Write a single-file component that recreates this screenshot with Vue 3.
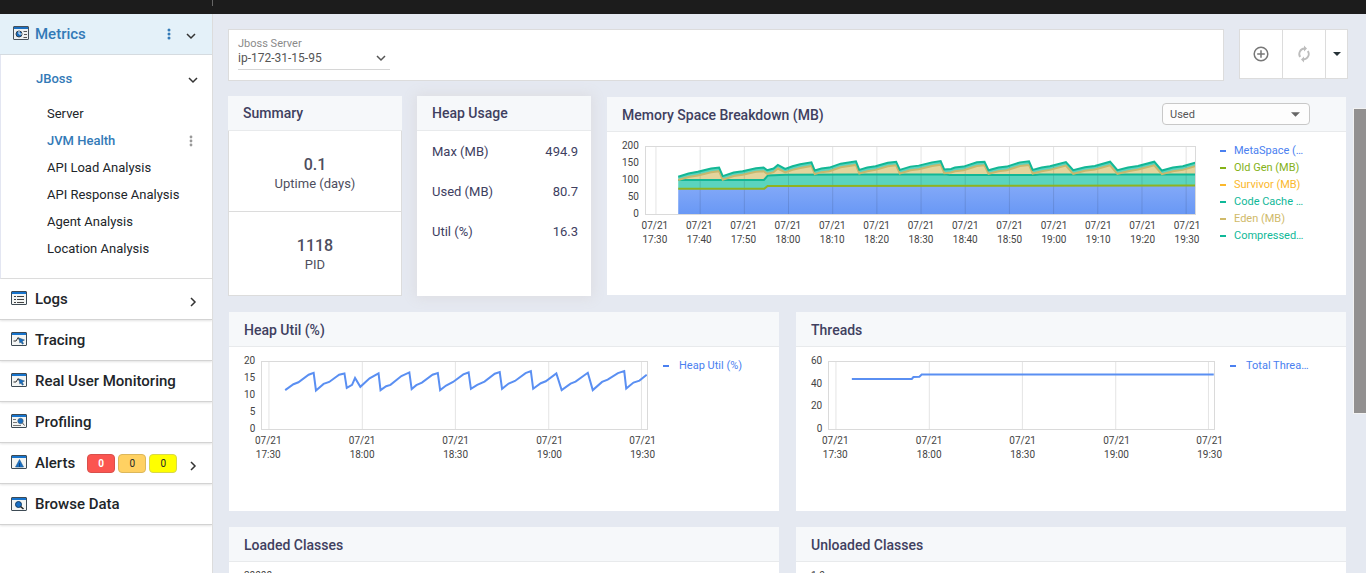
<script setup>
import { ref } from 'vue'

const server = ref('ip-172-31-15-95')
const mode = ref('Used')

const metricPages = [
  { label: 'Server' },
  { label: 'JVM Health', active: true },
  { label: 'API Load Analysis' },
  { label: 'API Response Analysis' },
  { label: 'Agent Analysis' },
  { label: 'Location Analysis' },
]

const sections = [
  { label: 'Logs', icon: 'logs', arrow: true },
  { label: 'Tracing', icon: 'pulse' },
  { label: 'Real User Monitoring', icon: 'pulse' },
  { label: 'Profiling', icon: 'profile' },
  {
    label: 'Alerts',
    icon: 'alert',
    arrow: true,
    badges: [
      { level: 'critical', count: 0 },
      { level: 'major', count: 0 },
      { level: 'minor', count: 0 },
    ],
  },
  { label: 'Browse Data', icon: 'browse' },
]

const summary = [
  { value: '0.1', label: 'Uptime (days)' },
  { value: '1118', label: 'PID' },
]

const heapUsage = [
  { label: 'Max (MB)', value: '494.9' },
  { label: 'Used (MB)', value: '80.7' },
  { label: 'Util (%)', value: '16.3' },
]

const memoryWidth = 1653
const plotHeight = 205

// Total memory curve; x and y are plot units measured from the top left corner.
const total = [
  [97, 91], [128, 81], [156, 76], [196, 66], [220, 63], [231, 89], [264, 78], [291, 74], [331, 65], [354, 63],
  [365, 71], [384, 66], [397, 55], [419, 67], [441, 59], [464, 53], [498, 47], [508, 72], [528, 66], [552, 63],
  [586, 51], [632, 44], [642, 70], [666, 63], [691, 59], [728, 48], [753, 45], [764, 70], [796, 60], [821, 57],
  [861, 47], [887, 43], [898, 69], [918, 67], [930, 63], [956, 60], [996, 47], [1019, 45], [1031, 71], [1061, 63],
  [1086, 60], [1126, 47], [1153, 44], [1164, 70], [1191, 63], [1216, 59], [1264, 46], [1286, 71], [1321, 62],
  [1351, 58], [1397, 45], [1419, 71], [1451, 63], [1481, 58], [1530, 45], [1553, 72], [1586, 63], [1616, 59],
  [1653, 48],
]
const codeCache = [[97, 101], [355, 101], [367, 87], [420, 85], [640, 84], [905, 84], [915, 86], [1170, 86], [1185, 84], [1653, 84]]
const metaSpace = [[97, 128], [356, 128], [366, 119], [1653, 118]]
const eden = total.map(([x, y]) => [x, Math.min(y + 11, x < 360 ? 101 : 84)])

const line = (points) => points.map((p) => p.join(',')).join(' ')
const area = (upper, lower) => line([...upper, ...[...lower].reverse()])
const floor = [[97, plotHeight], [memoryWidth, plotHeight]]

const memoryLabels = ['17:30', '17:40', '17:50', '18:00', '18:10', '18:20', '18:30', '18:40', '18:50', '19:00', '19:10', '19:20', '19:30']
const halfHours = [
  { at: 21, text: '17:30' },
  { at: 303, text: '18:00' },
  { at: 584, text: '18:30' },
  { at: 866, text: '19:00' },
  { at: 1146, text: '19:30' },
]

const memoryChart = {
  key: 'memory',
  title: 'Memory Space Breakdown (MB)',
  select: true,
  width: memoryWidth,
  yLabels: ['200', '150', '100', '50', '0'],
  ticks: memoryLabels.map((text, i) => ({ at: 30 + i * 133, text })),
  areas: [
    { points: area(metaSpace, floor), tone: 'meta-area' },
    { points: area(codeCache, metaSpace), tone: 'teal-area' },
    { points: area(eden, codeCache), tone: 'sand-area' },
    { points: area(total, eden), tone: 'teal-area' },
  ],
  lines: [
    { points: line(metaSpace), tone: 'olive-line' },
    { points: line(codeCache), tone: 'teal-line' },
    { points: line(eden), tone: 'sand-line' },
    { points: line(total), tone: 'teal-line' },
  ],
  legend: [
    { text: 'MetaSpace (…', tone: 'blue' },
    { text: 'Old Gen (MB)', tone: 'olive' },
    { text: 'Survivor (MB)', tone: 'amber' },
    { text: 'Code Cache …', tone: 'teal' },
    { text: 'Eden (MB)', tone: 'sand' },
    { text: 'Compressed…', tone: 'teal' },
  ],
}

const heapUtil =
  '70,86 95,68 110,62 141,39 156,33 163,87 186,67 203,61 233,39 249,35 256,79 272,70 281,49 297,76 325,50 352,35 358,86 375,74 388,70 421,43 445,32 452,83 466,71 483,63 515,39 531,34 538,86 556,72 577,61 608,38 624,32 631,82 650,70 672,60 703,36 718,31 725,82 745,66 764,58 796,34 812,28 819,82 842,65 857,59 889,35 905,86 932,66 947,60 984,33 999,86 1027,61 1044,54 1075,34 1094,28 1100,81 1122,63 1140,57 1162,39'

const charts = [
  {
    key: 'heap',
    title: 'Heap Util (%)',
    width: 1162,
    yLabels: ['20', '15', '10', '5', '0'],
    ticks: halfHours,
    lines: [{ points: heapUtil, tone: 'blue-line' }],
    legend: [{ text: 'Heap Util (%)', tone: 'blue' }],
  },
  {
    key: 'threads',
    title: 'Threads',
    width: 1162,
    yLabels: ['60', '40', '20', '0'],
    ticks: halfHours,
    lines: [{ points: '69,52 250,52 255,46 273,45 280,38 1162,38', tone: 'blue-line' }],
    legend: [{ text: 'Total Threa…', tone: 'blue' }],
  },
  { key: 'loaded', title: 'Loaded Classes', width: 1162, yLabels: ['20000'], ticks: [], lines: [], legend: [] },
  { key: 'unloaded', title: 'Unloaded Classes', width: 1162, yLabels: ['1.0'], ticks: [], lines: [], legend: [] },
]

const allCharts = [memoryChart, ...charts]
</script>

<template>
  <div class="app">
    <header class="topbar"><span class="topbar-rule"></span></header>
    <div class="shell">
      <nav class="sidebar" aria-label="Main">
        <div class="metrics-head">
          <svg class="icon raised-1" viewBox="0 0 16 14">
            <rect x=".5" y=".5" width="15" height="13" rx=".5" fill="#eef1f2" stroke="#47515a" />
            <path d="M1 1h14v2H1z" fill="#1b6fc0" />
            <circle cx="6" cy="8" r="3" fill="#176ec4" stroke="#33414d" />
            <path d="M6 5v3h3" fill="none" stroke="#e8f0f5" />
            <path d="M10.500 5.500H14M11 8.500h3M10.500 11.500H14" stroke="#555" />
          </svg>
          <a class="metrics-link" href="#metrics">Metrics</a>
          <button class="plain" type="button" aria-label="Metrics options">
            <svg class="dots" viewBox="0 0 4 12" fill="#337ab7">
              <circle cx="2" cy="2" r="1.500" /><circle cx="2" cy="6" r="1.500" /><circle cx="2" cy="10" r="1.500" />
            </svg>
          </button>
          <button class="plain" type="button" aria-label="Collapse Metrics">
            <svg class="chevron" viewBox="0 0 10 10"><path d="M1 3l4 4 4-4" /></svg>
          </button>
        </div>

        <div class="metrics-body">
          <div class="group-head">
            <a class="group-link" href="#jboss">JBoss</a>
            <button class="plain" type="button" aria-label="Collapse JBoss">
              <svg class="chevron" viewBox="0 0 10 10"><path d="M1 3l4 4 4-4" /></svg>
            </button>
          </div>
          <ul class="pages">
            <li v-for="page in metricPages" :key="page.label">
              <a :class="{ active: page.active }" href="#page">{{ page.label }}</a>
              <button v-if="page.active" class="plain" type="button" aria-label="Page options">
                <svg class="dots" viewBox="0 0 4 12" fill="#999">
                  <circle cx="2" cy="2" r="1.400" /><circle cx="2" cy="6" r="1.400" /><circle cx="2" cy="10" r="1.400" />
                </svg>
              </button>
            </li>
          </ul>
        </div>

        <a v-for="section in sections" :key="section.label" class="section" href="#section">
          <svg class="icon" :class="{ raised: section.icon !== 'browse' }" viewBox="0 0 16 14">
            <rect x=".5" y=".5" width="15" height="13" rx=".5" fill="#f3f5f4" stroke="#3d4a54" />
            <path d="M1 1h14v2H1z" fill="#1874cc" />
            <path v-if="section.icon === 'logs'" d="M3 5.500h2M6 5.500h7M3 8.500h2M6 8.500h7M3 11.500h2M6 11.500h7" stroke="#444" />
            <template v-else-if="section.icon === 'pulse'">
              <path d="M2.500 9H5l2.200-3.500L8.500 8" fill="none" stroke="#333" />
              <path d="M8 6l5.500 2-2.300 1.200 1.300 2.300-1.200.7-1.300-2.300L8.800 11z" fill="#176ec4" stroke="#244a68" stroke-width=".5" />
            </template>
            <template v-else-if="section.icon === 'profile'">
              <path d="M2 5.500h3M2 8.500h4M2 11.500h8" stroke="#777" />
              <circle cx="9.500" cy="7" r="2.700" fill="#176ec4" stroke="#47637a" stroke-width=".7" />
              <path d="M11.500 9l2 2.500" stroke="#555" />
            </template>
            <template v-else-if="section.icon === 'alert'">
              <path d="M8.500 4.500l4 7.500h-8z" fill="#176ec4" stroke="#225c8e" stroke-width=".6" stroke-linejoin="round" />
              <path d="M8.500 8v4" stroke="#0f4276" />
            </template>
            <template v-else>
              <circle cx="7.500" cy="7.500" r="3" fill="#176ec4" stroke="#123c63" />
              <path d="M9.500 9.500l3 2.500" stroke="#222" stroke-width="1.500" />
            </template>
          </svg>
          <span>{{ section.label }}</span>
          <span v-if="section.badges" class="badges">
            <span v-for="badge in section.badges" :key="badge.level" class="badge" :class="badge.level">{{ badge.count }}</span>
          </span>
          <svg v-if="section.arrow" class="chevron side" viewBox="0 0 10 10"><path d="M3 1l4 4-4 4" /></svg>
        </a>
      </nav>

      <main class="content">
        <div class="filters">
          <div class="filter-bar">
            <label class="server-field">
              <span class="server-label">Jboss Server</span>
              <span class="select-wrap">
                <select v-model="server">
                  <option>ip-172-31-15-95</option>
                </select>
                <svg class="chevron" viewBox="0 0 10 10"><path d="M1 3l4 4 4-4" /></svg>
              </span>
            </label>
          </div>
          <div class="tools">
            <button type="button" aria-label="Add">
              <svg width="16" height="16" viewBox="0 0 16 16" fill="none" stroke="#777" stroke-width="1.500">
                <circle cx="8" cy="8" r="6.800" /><path d="M8 4.200v7.600M4.200 8h7.600" />
              </svg>
            </button>
            <button type="button" aria-label="Refresh">
              <svg width="16" height="18" viewBox="0 0 16 18" fill="#bdbdbd">
                <path d="M8.500 3.500a5.500 5.500 0 0 0-4.300 8.600M7.500 14.500a5.500 5.500 0 0 0 4.300-8.600" fill="none" stroke="#bdbdbd" stroke-width="1.800" />
                <path d="M8 .5L11 3.500 8 6.500zM8 11.500v6l-3-3z" />
              </svg>
            </button>
            <button class="narrow" type="button" aria-label="Refresh options">
              <svg width="8" height="4" viewBox="0 0 8 4"><path d="M0 0h8L4 4z" fill="#263238" /></svg>
            </button>
          </div>
        </div>

        <div class="cards">
          <section class="card summary">
            <h2>Summary</h2>
            <div v-for="item in summary" :key="item.label" class="stat">
              <strong>{{ item.value }}</strong>
              <span>{{ item.label }}</span>
            </div>
          </section>

          <section class="card usage">
            <h2>Heap Usage</h2>
            <table>
              <tbody>
                <tr v-for="row in heapUsage" :key="row.label">
                  <th scope="row">{{ row.label }}</th>
                  <td>{{ row.value }}</td>
                </tr>
              </tbody>
            </table>
          </section>

          <section v-for="chart in allCharts" :key="chart.key" class="card chart-card" :class="chart.key">
            <div class="card-head">
              <h2>{{ chart.title }}</h2>
              <span v-if="chart.select" class="select-wrap mode">
                <select v-model="mode" aria-label="Memory measure">
                  <option>Used</option>
                </select>
                <svg class="caret" viewBox="0 0 10 5"><path d="M0 0h10L5 5z" /></svg>
              </span>
            </div>
            <div class="chart">
              <div class="y-axis">
                <span v-for="label in chart.yLabels" :key="label">{{ label }}</span>
              </div>
              <div class="plot-column">
                <svg class="plot" :viewBox="`0 0 ${chart.width} ${plotHeight}`" preserveAspectRatio="none">
                  <defs>
                    <linearGradient :id="`meta-${chart.key}`" x1="0" y1="0" x2="0" y2="1">
                      <stop offset="0" stop-color="#83a9f8" />
                      <stop offset="1" stop-color="#6998f5" />
                    </linearGradient>
                  </defs>
                  <polygon
                    v-for="(shape, i) in chart.areas"
                    :key="i"
                    :points="shape.points"
                    :class="shape.tone"
                    :fill="shape.tone === 'meta-area' ? `url(#meta-${chart.key})` : null"
                  />
                  <line v-for="tick in chart.ticks" :key="tick.at" class="grid-line" :x1="tick.at" :x2="tick.at" y1="0" :y2="plotHeight" />
                  <polyline v-for="(shape, i) in chart.lines" :key="i" class="series" :class="shape.tone" :points="shape.points" />
                </svg>
                <div class="x-axis">
                  <span v-for="tick in chart.ticks" :key="tick.text" :style="{ left: (tick.at / chart.width) * 100 + '%' }">07/21<br />{{ tick.text }}</span>
                </div>
              </div>
              <ul class="legend">
                <li v-for="entry in chart.legend" :key="entry.text" :class="entry.tone">{{ entry.text }}</li>
              </ul>
            </div>
          </section>
        </div>
      </main>

      <div class="scroll-rail"><div class="scroll-thumb"></div></div>
    </div>
  </div>
</template>

<style>
body {
  background: #e5e9f1;
}
</style>

<style scoped>
* {
  box-sizing: border-box;
}
.app {
  display: flex;
  flex-direction: column;
  height: 100vh;
  overflow: hidden;
  background: #e5e9f1;
  color: #212529;
  font-family: Roboto, "Liberation Sans", sans-serif;
  font-size: 13px;
}
a {
  color: inherit;
  text-decoration: none;
}
ul {
  list-style: none;
  margin: 0;
  padding: 0;
}
h2 {
  margin: 0;
  font-size: 14px;
  line-height: 20px;
  font-weight: 500;
  color: #40405f;
}
.topbar {
  flex: none;
  display: flex;
  height: 14px;
  background: #1c1c1c;
}
.topbar-rule {
  width: 213px;
  height: 6px;
  border-right: 1px solid #666;
}
.shell {
  display: flex;
  flex: 1;
  min-height: 0;
}
.sidebar {
  flex: none;
  width: 213px;
  background: #fff;
  border-right: 1px solid #dcdcdc;
}
.metrics-head {
  display: flex;
  align-items: center;
  height: 41px;
  padding: 0 16px 0 13px;
  background: #e4f1f9;
  border-bottom: 1px solid #d5dbe0;
}
.metrics-link {
  flex: 1;
  margin-left: 6px;
  font-size: 15px;
  font-weight: 500;
  color: #337ab7;
}
.icon {
  flex: none;
  display: block;
  width: 16px;
  height: 14px;
}
.raised-1 {
  margin-bottom: 2px;
}
.raised {
  margin-bottom: 3px;
}
.plain {
  display: flex;
  margin: 0;
  padding: 0;
  border: 0;
  background: none;
}
.dots {
  width: 4px;
  height: 12px;
}
.metrics-head .chevron {
  margin: 4px 0 0 15px;
}
.chevron {
  width: 10px;
  height: 10px;
  fill: none;
  stroke: #333;
  stroke-width: 1.5;
}
.metrics-body {
  padding: 9px 14px 16px 35px;
  border-left: 1px solid #e3e6f2;
  border-bottom: 1px solid #dcdcdc;
}
.group-head {
  display: flex;
  align-items: center;
  justify-content: space-between;
  height: 28px;
  margin-bottom: 8px;
}
.group-head .chevron {
  margin-top: 3px;
}
.group-link,
.pages .active {
  color: #337ab7;
}
.group-link {
  font-weight: 500;
}
.pages {
  padding: 0 5px 0 11px;
}
.pages li {
  display: flex;
  align-items: center;
  justify-content: space-between;
  height: 27px;
}
.pages .active {
  font-weight: 500;
}
.section {
  display: flex;
  align-items: center;
  height: 41px;
  padding: 0 14px 0 11px;
  border-bottom: 1px solid #d2d2d2;
  box-shadow: 0 1px 2px #e4e4e4;
  font-size: 15px;
  font-weight: 500;
}
.section > span:first-of-type {
  margin-left: 8px;
}
.section .side {
  margin: 5px 0 0 auto;
}
.badges {
  display: flex;
  gap: 3px;
  margin-left: 12px;
}
.badge {
  width: 28px;
  height: 19px;
  border: 1px solid;
  border-radius: 4px;
  font-size: 10px;
  line-height: 17px;
  font-weight: 400;
  text-align: center;
}
.badge.critical {
  background: #fb5550;
  border-color: #d9504c;
  color: #fff;
  font-weight: 700;
}
.major {
  background: #ffd162;
  border-color: #dcb75b;
}
.minor {
  background: #ff0;
  border-color: #d8d84a;
}
.content {
  flex: 1;
  min-width: 0;
  padding: 15px 5px 0 15px;
}
.filters {
  display: flex;
  align-items: flex-start;
  gap: 15px;
}
.filter-bar {
  flex: 1;
  height: 52px;
  padding: 7px 9px;
  background: #fff;
  border: 1px solid #dcdcdc;
}
.server-field {
  display: block;
  width: 152px;
  border-bottom: 1px solid #d6d6d6;
}
.server-label {
  display: block;
  font-size: 11px;
  line-height: 14px;
  color: #8a8a8a;
}
.select-wrap {
  display: grid;
  align-items: center;
}
.select-wrap > * {
  grid-area: 1 / 1;
}
.select-wrap > svg {
  justify-self: end;
  pointer-events: none;
}
.server-field .chevron {
  margin: 0 4px 4px 0;
  stroke: #555;
}
select {
  appearance: none;
  width: 100%;
  margin: 0;
  padding: 0;
  border: 0;
  background: none;
  font: inherit;
  color: #555;
}
.server-field select {
  height: 18px;
  padding-bottom: 4px;
  font-size: 12px;
}
.tools {
  display: flex;
  height: 50px;
  background: #fff;
  border: 1px solid #dcdcdc;
}
.tools button {
  display: flex;
  align-items: center;
  justify-content: center;
  width: 43px;
  margin: 0;
  padding: 0;
  border: 0;
  border-right: 1px solid #dcdcdc;
  background: none;
}
.tools .narrow {
  width: 21px;
  border: 0;
}
.cards {
  display: grid;
  grid-template-columns: 174px 174px 174fr 551fr;
  gap: 15px;
  margin: 15px 2px 0 0;
}
.card {
  min-width: 0;
  background: #fff;
}
.card > h2,
.card-head {
  height: 35px;
  padding: 7px 15px;
  background: #f6f8fa;
  border-bottom: 1px solid #e8eaec;
}
.summary,
.usage {
  height: 200px;
}
.usage {
  box-shadow: 0 0 12px 2px #dddde2;
}
.stat {
  display: flex;
  flex-direction: column;
  align-items: center;
  height: 81px;
  padding-top: 24px;
  border: 1px solid #dcdcdc;
  border-top: 0;
  color: #4e4e5e;
}
.stat:last-child {
  height: 84px;
}
.stat strong {
  font-size: 16px;
  line-height: 20px;
  font-weight: 500;
}
.stat span {
  line-height: 18px;
}
table {
  width: 100%;
  padding: 0 13px 0 15px;
  border-spacing: 0;
  color: #40405f;
}
th,
td {
  height: 40px;
  padding: 0;
  font-weight: 400;
  text-align: left;
}
td {
  text-align: right;
}
.chart-card {
  height: 199px;
  margin: 1px 0 0 1px;
}
.card-head {
  display: flex;
  align-items: flex-start;
  justify-content: space-between;
  padding-top: 8px;
}
.memory {
  grid-column: 3 / 5;
  height: 198px;
}
.heap,
.loaded {
  grid-column: 1 / 4;
  margin-right: 1px;
}
.mode {
  width: 148px;
  height: 22px;
  margin: -2px 21px 0 0;
  padding: 0 9px 0 7px;
  background: #fdfdfd;
  border: 1px solid #c8c8c8;
  border-radius: 4px;
  font-size: 11px;
}
.caret {
  width: 9px;
  height: 5px;
  fill: #666;
}
.chart {
  display: flex;
  padding: 14px 33px 0 15px;
}
.memory .chart {
  padding-right: 40px;
}
.y-axis {
  display: flex;
  flex-direction: column;
  justify-content: space-between;
  height: 82px;
  margin: -7px 6px 0 0;
  font-size: 10px;
  line-height: 14px;
  text-align: right;
  color: #444;
}
.plot-column {
  flex: 1;
  min-width: 0;
}
.plot {
  display: block;
  width: 100%;
  height: 69px;
  border: 1px solid #dadada;
}
.grid-line {
  stroke: #000;
  stroke-opacity: 0.11;
  vector-effect: non-scaling-stroke;
}
.series {
  fill: none;
  stroke-width: 2;
  vector-effect: non-scaling-stroke;
}
.blue-line {
  stroke: #5a8ff2;
}
.teal-line {
  stroke: #13b795;
}
.sand-line {
  stroke: #c8b86e;
}
.olive-line {
  stroke: #8fb320;
}
.teal-area {
  fill: #5bd4be;
}
.sand-area {
  fill: #e3d49c;
}
.x-axis {
  position: relative;
  height: 34px;
  font-size: 10px;
  line-height: 14px;
  text-align: center;
  color: #444;
}
.x-axis span {
  position: absolute;
  top: 4px;
  transform: translateX(-50%);
}
.legend {
  flex: none;
  width: 98px;
  padding-left: 15px;
  margin-top: -4px;
  font-size: 11px;
  line-height: 18px;
  white-space: nowrap;
}
.memory .legend {
  width: 110px;
  padding-left: 24px;
  line-height: 17px;
}
.legend li {
  display: flex;
  align-items: center;
  gap: 10px;
}
.memory .legend li {
  gap: 8px;
}
.legend li::before {
  content: "";
  width: 6px;
  height: 2px;
  background: currentColor;
}
.blue {
  color: #4a80f0;
}
.olive {
  color: #84b217;
}
.amber {
  color: #fbb82c;
}
.teal {
  color: #0fb898;
}
.sand {
  color: #d0ba6a;
}
.scroll-rail {
  flex: none;
  width: 13px;
}
.scroll-thumb {
  height: 306px;
  margin-top: 94px;
  background: #929090;
  border: 1px solid #f2f2f2;
  border-right: 0;
}
</style>
